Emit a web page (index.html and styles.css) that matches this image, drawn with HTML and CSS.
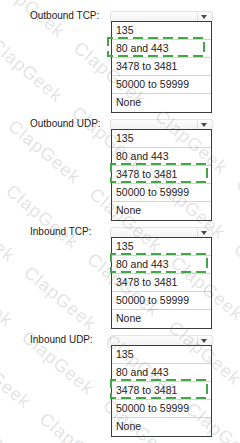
FILE: index.html
```html
<!DOCTYPE HTML>
<html>
<head>
    <meta charset="UTF-8">
    <meta name="viewport" content="width=device-width, initial-scale=1">
    <title>Firewall ports</title>
    <link rel="stylesheet" href="styles.css">
</head>
<body>
    <div class="page">
        <div class="field field-1">
            <span class="field-label">Outbound TCP:</span>
            <div class="dropdown">
                <div class="dropdown-bar"><span class="dropdown-arrow"></span></div>
                <ul class="options">
                    <li>135</li>
                    <li class="picked">80 and 443
                        <svg class="pick-mark" width="98" height="20"><rect x="1" y="1" width="96" height="18"/></svg>
                    </li>
                    <li>3478 to 3481</li>
                    <li>50000 to 59999</li>
                    <li>None</li>
                </ul>
            </div>
        </div>
        <div class="field field-2">
            <span class="field-label">Outbound UDP:</span>
            <div class="dropdown">
                <div class="dropdown-bar"><span class="dropdown-arrow"></span></div>
                <ul class="options">
                    <li>135</li>
                    <li>80 and 443</li>
                    <li class="picked">3478 to 3481
                        <svg class="pick-mark" width="98" height="20"><rect x="1" y="1" width="96" height="18"/></svg>
                    </li>
                    <li>50000 to 59999</li>
                    <li>None</li>
                </ul>
            </div>
        </div>
        <div class="field field-3">
            <span class="field-label">Inbound TCP:</span>
            <div class="dropdown">
                <div class="dropdown-bar"><span class="dropdown-arrow"></span></div>
                <ul class="options">
                    <li>135</li>
                    <li class="picked">80 and 443
                        <svg class="pick-mark" width="98" height="20"><rect x="1" y="1" width="96" height="18"/></svg>
                    </li>
                    <li>3478 to 3481</li>
                    <li>50000 to 59999</li>
                    <li>None</li>
                </ul>
            </div>
        </div>
        <div class="field field-4">
            <span class="field-label">Inbound UDP:</span>
            <div class="dropdown">
                <div class="dropdown-bar"><span class="dropdown-arrow"></span></div>
                <ul class="options">
                    <li>135</li>
                    <li>80 and 443</li>
                    <li class="picked">3478 to 3481
                        <svg class="pick-mark" width="98" height="20"><rect x="1" y="1" width="96" height="18"/></svg>
                    </li>
                    <li>50000 to 59999</li>
                    <li>None</li>
                </ul>
            </div>
        </div>
        <!-- watermark layer -->
        <div class="watermark">
            <div class="wm-line">ClapGeek ClapGeek ClapGeek ClapGeek ClapGeek ClapGeek</div>
            <div class="wm-line">ClapGeek ClapGeek ClapGeek ClapGeek ClapGeek ClapGeek</div>
            <div class="wm-line">ClapGeek ClapGeek ClapGeek ClapGeek ClapGeek ClapGeek</div>
            <div class="wm-line">ClapGeek ClapGeek ClapGeek ClapGeek ClapGeek ClapGeek</div>
            <div class="wm-line">ClapGeek ClapGeek ClapGeek ClapGeek ClapGeek ClapGeek</div>
            <div class="wm-line">ClapGeek ClapGeek ClapGeek ClapGeek ClapGeek ClapGeek</div>
            <div class="wm-line">ClapGeek ClapGeek ClapGeek ClapGeek ClapGeek ClapGeek</div>
            <div class="wm-line">ClapGeek ClapGeek ClapGeek ClapGeek ClapGeek ClapGeek</div>
            <div class="wm-line">ClapGeek ClapGeek ClapGeek ClapGeek ClapGeek ClapGeek</div>
            <div class="wm-line">ClapGeek ClapGeek ClapGeek ClapGeek ClapGeek ClapGeek</div>
            <div class="wm-line">ClapGeek ClapGeek ClapGeek ClapGeek ClapGeek ClapGeek</div>
        </div>
    </div>
</body>
</html>
```

FILE: styles.css
```css
body {margin: 0; background: #fff; color: #222; font-family: "Liberation Sans", Arial, sans-serif;}
.page {position: relative; height: 443px; overflow: hidden; padding-top: 11px; box-sizing: border-box;}
.field {display: flex; align-items: flex-start; padding-left: 30px; height: 108px;}
.field-label {width: 80px; font-size: 10px; line-height: 10px;}
.dropdown {width: 103px;}
.dropdown-bar {position: relative; height: 10px; box-sizing: border-box; border: 1px solid #e3e3e3; border-bottom: none; border-radius: 3px 3px 0 0; background: linear-gradient(#fdfdfd, #f3f3f3);}
.dropdown-bar::before {content: ""; position: absolute; left: 86px; top: 1px; height: 8px; border-left: 1px solid #e0e0e0;}
.dropdown-arrow {position: absolute; left: 90px; top: 3px; border-left: 3.5px solid transparent; border-right: 3.5px solid transparent; border-top: 4px solid #4a4a4a;}
.options {margin: 0 1px; padding: 0; list-style: none; border: 1px solid #3c3c3c; font-size: 10.5px;}
.options li {position: relative; height: 17px; line-height: 17px; padding-left: 4px; border-bottom: 1px solid #d4d4d4;}
.options li:last-child {border-bottom: none; height: 18px;}
.pick-mark {position: absolute; left: -5px; top: -3px; overflow: visible;}
.pick-mark rect {fill: none; stroke: #43a649; stroke-width: 2; stroke-dasharray: 10 5; stroke-dashoffset: 5;}
.field-2 .pick-mark, .field-3 .pick-mark, .field-4 .pick-mark {left: -2px;}
.watermark {position: absolute; left: -70px; top: -110px; width: 900px; transform: rotate(40deg); transform-origin: 0 0; pointer-events: none; color: rgba(110, 110, 110, 0.2); font-size: 18px; line-height: 51px; white-space: nowrap;}
.wm-line {letter-spacing: 1px; word-spacing: 12px;}
.wm-line:nth-child(even) {padding-left: 40px;}
```
